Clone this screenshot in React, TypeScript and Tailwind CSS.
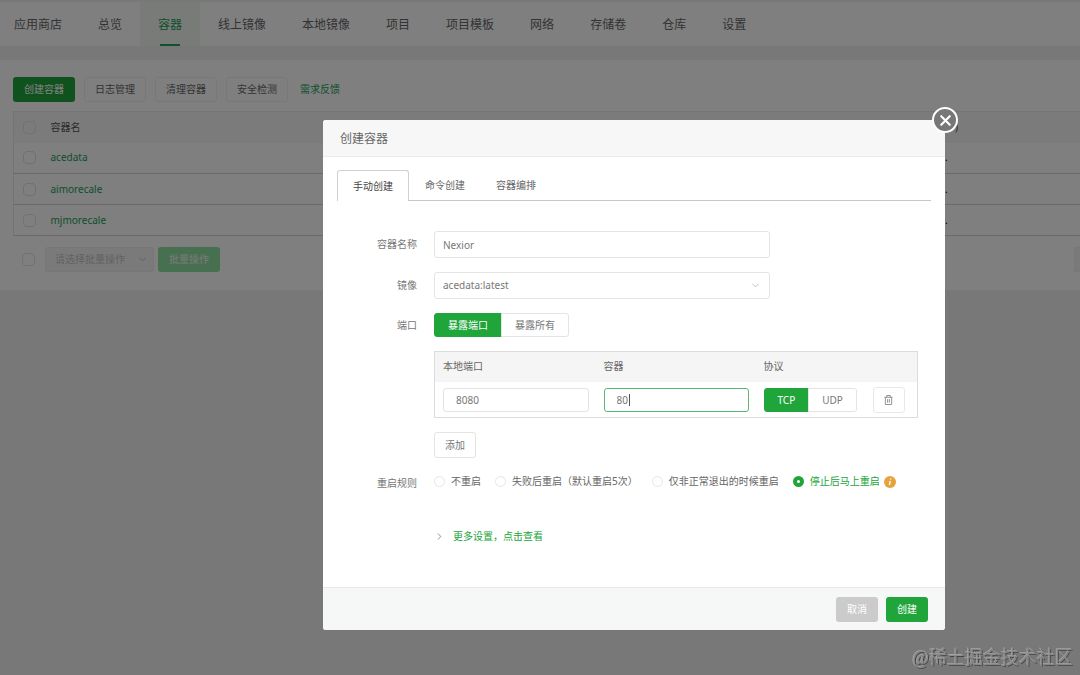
import { useState } from "react";
import { ChevronDown, ChevronRight, X } from "lucide-react";

const nav = ["应用商店", "总览", "容器", "线上镜像", "本地镜像", "项目", "项目模板", "网络", "存储卷", "仓库", "设置"];
const tools = ["日志管理", "清理容器", "安全检测"];
const containers = ["acedata", "aimorecale", "mjmorecale"];
const tabs = ["手动创建", "命令创建", "容器编排"];
const restartRules = ["不重启", "失败后重启（默认重启5次）", "仅非正常退出的时候重启", "停止后马上重启"];

const box = "block size-[13px] appearance-none rounded-sm border border-[#e2e2e2]";

function Toggle({ options }: { options: string[] }) {
  const [value, setValue] = useState(options[0]);
  return (
    <div className="flex h-6">
      {options.map((o) => (
        <button
          key={o}
          type="button"
          onClick={() => setValue(o)}
          className={`border px-[13px] first:rounded-l-[3px] last:-ml-px last:rounded-r-[3px] ${
            o === value ? "border-[#20a53a] bg-[#20a53a] text-white" : "border-[#e4e4e4] bg-white text-[#777]"
          }`}
        >
          {o}
        </button>
      ))}
    </div>
  );
}

function TrashIcon() {
  return (
    <svg width="9" height="10" viewBox="0 0 10 11" fill="none" stroke="#888" strokeWidth="1">
      <path d="M0.5 2.5h9M3 2.5v-2h4v2M1.5 2.5v8h7v-8M4 4.5v4M6 4.5v4" />
    </svg>
  );
}

function Page() {
  return (
    <div>
      <nav className="flex h-[46px] border-t-2 border-[#f0f0f0] bg-white text-xs text-[#666]">
        {nav.map((label) => {
          const active = label === "容器";
          return (
            <a
              key={label}
              href="#"
              className={`relative flex shrink-0 items-center px-[18px] pt-0.5 first:pl-3.5 ${
                active ? "bg-[#f0f7f1] text-[#20a05a]" : ""
              }`}
            >
              {label}
              {active && <span className="absolute inset-x-5 bottom-0 h-0.5 bg-[#20a05a]" />}
            </a>
          );
        })}
      </nav>

      <main className="mt-3.5 bg-white pt-[17px] pb-[18px] pl-[13px]">
        <div className="flex items-center gap-[9px]">
          <button type="button" className="h-[25px] rounded-[3px] bg-[#20a53a] px-[11px] text-white">
            创建容器
          </button>
          {tools.map((t) => (
            <button key={t} type="button" className="h-[25px] rounded-[3px] border border-[#f0f0f0] px-2.5 text-[#666]">
              {t}
            </button>
          ))}
          <a href="#" className="ml-[3px] text-[#20a05a]">
            需求反馈
          </a>
        </div>

        <table className="mt-[9px] w-full table-fixed border-collapse border border-r-0 border-[#e8e8e8] text-left">
          <colgroup>
            <col className="w-[37px]" />
            <col />
            <col className="w-[148px]" />
          </colgroup>
          <thead>
            <tr className="h-[31px] bg-[#f7f7f7] text-[#555]">
              <th className="pl-[9px]">
                <input type="checkbox" aria-label="全选" className={box} />
              </th>
              <th className="font-normal">容器名</th>
              <th className="pl-[23px] font-normal">)</th>
            </tr>
          </thead>
          <tbody>
            {containers.map((name) => (
              <tr key={name} className="h-[31px] border-b border-[#d4d4d4]">
                <td className="pl-[9px]">
                  <input type="checkbox" aria-label={name} className={box} />
                </td>
                <td>
                  <a href="#" className="text-[#20a05a]">
                    {name}
                  </a>
                </td>
                <td className="pl-[13px]">.</td>
              </tr>
            ))}
          </tbody>
        </table>

        <div className="mt-[11px] flex items-center pl-[9px]">
          <input type="checkbox" aria-label="全选本页" className={box} />
          <div className="relative ml-2.5">
            <select
              disabled
              aria-label="批量操作"
              className="block h-[25px] w-[109px] appearance-none rounded-[3px] border border-[#eee] bg-[#f5f5f5] px-[9px] text-[#c4c4c4] opacity-100"
            >
              <option>请选择批量操作</option>
            </select>
            <ChevronDown size={11} className="absolute top-[7px] right-1.5 text-[#bbb]" />
          </div>
          <button type="button" disabled className="ml-1 h-[25px] rounded-[3px] bg-[#8fe0a0] px-[11px] text-[#f4f4f4]">
            批量操作
          </button>
          <div className="ml-auto h-[25px] w-1.5 border border-r-0 border-[#eee] bg-[#f5f5f5]" />
        </div>
      </main>
    </div>
  );
}

function CreateDialog() {
  const [tab, setTab] = useState(tabs[0]);
  const [rule, setRule] = useState(restartRules[3]);
  const label = "w-20 shrink-0 text-right text-[#777]";
  const row = "flex items-center gap-[17px]";
  const input = "block w-full rounded-[3px] border bg-white text-[#777] outline-none";

  return (
    <div role="dialog" aria-labelledby="dialog-title" className="relative flex-1 rounded-[3px] bg-white text-[#666]">
      <button
        type="button"
        aria-label="关闭"
        className="absolute -top-[13px] -right-[13px] flex size-[26px] items-center justify-center rounded-full border-2 border-white bg-[#777] text-white"
      >
        <X size={17} strokeWidth={3} />
      </button>

      <h2 id="dialog-title" className="h-[37px] rounded-t-[3px] border-b border-[#ececec] bg-[#f7f7f7] pl-[17px] text-xs leading-[38px]">
        创建容器
      </h2>

      <div className="px-3.5 pt-[13px] pb-[42px]">
        <div role="tablist" className="flex h-[31px] gap-px border-b border-[#c8c8c8]">
          {tabs.map((t) => (
            <button
              key={t}
              type="button"
              role="tab"
              aria-selected={t === tab}
              onClick={() => setTab(t)}
              className={
                t === tab
                  ? "-mb-px rounded-t-[3px] border border-b-0 border-[#d0d0d0] bg-white px-[15px] text-[#444]"
                  : "px-[15px] pt-px"
              }
            >
              {t}
            </button>
          ))}
        </div>

        <form className="mt-[30px] flex flex-col gap-3.5">
          <div className={row}>
            <label htmlFor="name" className={label}>
              容器名称
            </label>
            <div className="w-[336px]">
              <input id="name" defaultValue="Nexior" className={`${input} h-[27px] border-[#e4e4e4] px-2`} />
            </div>
          </div>

          <div className={row}>
            <label htmlFor="image" className={label}>
              镜像
            </label>
            <div className="relative w-[336px]">
              <select id="image" className={`${input} h-[27px] appearance-none border-[#e4e4e4] px-2`}>
                <option>acedata:latest</option>
              </select>
              <ChevronDown size={11} className="absolute top-2 right-[9px] text-[#bbb]" />
            </div>
          </div>

          <div className={row}>
            <span className={label}>端口</span>
            <Toggle options={["暴露端口", "暴露所有"]} />
          </div>

          <div className="mr-[13px] ml-[97px]">
            <table className="w-full table-fixed border border-[#dcdcdc] text-left">
              <colgroup>
                <col className="w-[161px]" />
                <col className="w-40" />
                <col className="w-[109px]" />
                <col />
              </colgroup>
              <thead>
                <tr className="h-[30px] bg-[#f5f5f5]">
                  <th className="pl-2 font-normal">本地端口</th>
                  <th className="pl-2 font-normal">容器</th>
                  <th className="pl-2 font-normal">协议</th>
                  <th aria-label="操作" />
                </tr>
              </thead>
              <tbody>
                <tr className="h-9">
                  <td className="pt-0.5 pr-[7px] pl-2">
                    <input aria-label="本地端口" defaultValue="8080" className={`${input} h-6 border-[#e4e4e4] px-3`} />
                  </td>
                  <td className="pt-0.5 pr-[7px] pl-2">
                    <div className="relative">
                      <input aria-label="容器端口" defaultValue="80" className={`${input} h-6 border-[#55b878] px-3`} />
                      <span className="absolute top-1.5 left-[25px] h-3 w-px bg-[#555]" />
                    </div>
                  </td>
                  <td className="pt-0.5 pl-2">
                    <Toggle options={["TCP", "UDP"]} />
                  </td>
                  <td className="pt-0.5 pl-2">
                    <button
                      type="button"
                      aria-label="删除"
                      className="flex h-[26px] w-8 items-center justify-center rounded-[3px] border border-[#e8e8e8]"
                    >
                      <TrashIcon />
                    </button>
                  </td>
                </tr>
              </tbody>
            </table>
          </div>

          <button type="button" className="ml-[97px] h-[26px] self-start rounded-[3px] border border-[#e4e4e4] px-2.5 text-[#777]">
            添加
          </button>

          <div className={row}>
            <span className={`${label} pt-1`}>重启规则</span>
            <div className="flex items-center gap-3.5 whitespace-nowrap">
              {restartRules.map((r) => (
                <label key={r} className={`flex items-center gap-1.5 ${r === rule ? "text-[#20a53a]" : ""}`}>
                  <input
                    type="radio"
                    name="restart"
                    checked={r === rule}
                    onChange={() => setRule(r)}
                    className="size-[11px] appearance-none rounded-full border border-[#e6e6e6] checked:border-4 checked:border-[#20a53a]"
                  />
                  {r}
                </label>
              ))}
              <svg width="12" height="12" viewBox="0 0 12 12" className="-ml-2.5">
                <circle cx="6" cy="6" r="6" fill="#e6a23c" />
                <path d="M6.2 5L5.4 9M6.7 2.5L6.5 3.5" stroke="#fff" strokeWidth="1.4" />
              </svg>
            </div>
          </div>

          <a href="#" className="mt-[22px] ml-[97px] flex items-center gap-2 self-start leading-[18px] text-[#20a53a]">
            <ChevronRight size={11} className="text-[#888]" />
            更多设置，点击查看
          </a>
        </form>
      </div>

      <div className="flex h-[43px] items-center justify-end gap-2 rounded-b-[3px] border-t border-[#e8e8e8] bg-[#f6f8f7] px-[17px]">
        <button type="button" className="h-[25px] rounded-[3px] bg-[#cbcbcb] px-[11px] text-white">
          取消
        </button>
        <button type="button" className="h-[25px] rounded-[3px] bg-[#20a53a] px-[11px] text-white">
          创建
        </button>
      </div>
    </div>
  );
}

export default function App() {
  return (
    <div className="relative min-h-screen overflow-hidden bg-[#f0f0f0] font-['Noto_Sans','Noto_Sans_CJK_SC',sans-serif] text-[10px]">
      <Page />
      <div className="fixed inset-0 flex items-start bg-black/50 pt-[120px] pr-[135px] pl-[323px]">
        <CreateDialog />
      </div>
      <div className="fixed right-[7px] bottom-[3px] font-['Liberation_Serif','Noto_Sans_CJK_SC',serif] text-lg font-light text-[#8c8c8c] [text-shadow:-1px_-1px_0_#a4a4a4,1px_1px_0_#444]">
        @稀土掘金技术社区
      </div>
    </div>
  );
}
